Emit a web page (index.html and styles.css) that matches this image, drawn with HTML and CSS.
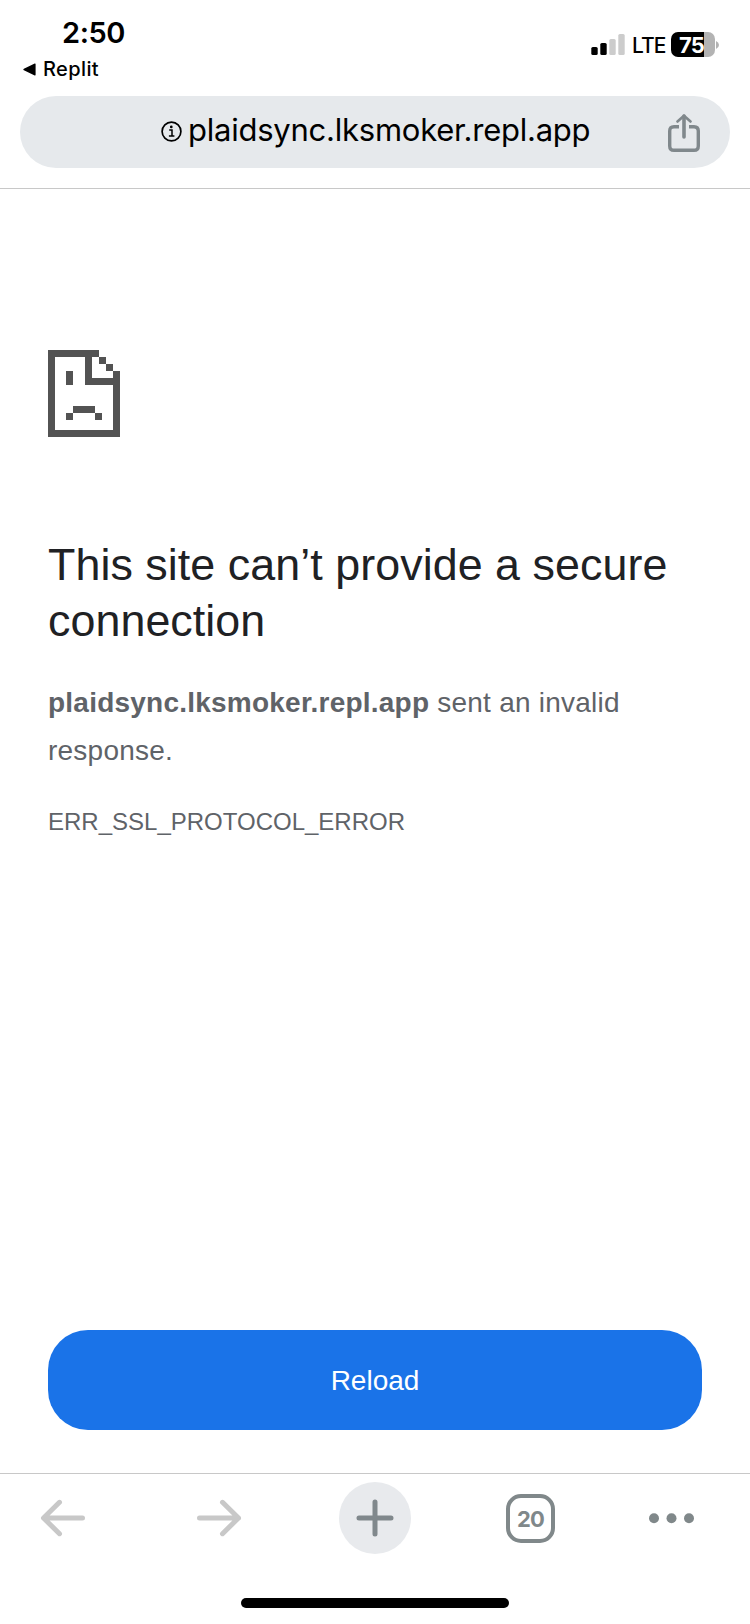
FILE: index.html
```html
<!DOCTYPE html>
<html lang="en">
<head>
<meta charset="utf-8">
<title>plaidsync.lksmoker.repl.app</title>
<link rel="stylesheet" href="styles.css">
</head>
<body>
<div class="screen">
  <header class="status">
    <div class="status-left">
      <span class="time">2:50</span>
      <span class="back-app">
        <svg width="13" height="13" viewBox="0 0 13 13"><path d="M12.600 1.200v10.600q0 .9-.9.6L.9 7.300q-1.200-.8 0-1.600L11.700 .6q.9-.3.9.6z"/></svg>
        <span class="back-label">Replit</span>
      </span>
    </div>
    <div class="status-right">
      <svg class="signal" width="34" height="22" viewBox="0 0 34 22">
        <rect x="0.300" y="13" width="6.400" height="8" rx="1.600"/>
        <rect x="9.300" y="9" width="6.400" height="12" rx="1.600"/>
        <rect x="18.300" y="5" width="6.400" height="16" rx="1.600" fill="#ccc"/>
        <rect x="27.300" y="0" width="6.400" height="21" rx="1.600" fill="#ccc"/>
      </svg>
      <span class="network">LTE</span>
      <span class="battery"><span class="battery-level">75</span></span>
      <svg class="battery-cap" width="3" height="8" viewBox="0 0 3 8"><path d="M0 0q3 1.300 3 4t-3 4z" fill="#b3b3b3"/></svg>
    </div>
  </header>

  <div class="omnibox">
    <svg class="info" width="21" height="21" viewBox="0 0 21 21">
      <circle cx="10.500" cy="10.500" r="9.400" fill="none" stroke="#000" stroke-width="1.700"/>
      <circle cx="10.300" cy="5.900" r="1.350"/>
      <path d="M8.200 9.100h2.800v5.700M7.900 15h5.500" fill="none" stroke="#000" stroke-width="1.500"/>
    </svg>
    <span class="url">plaidsync.lksmoker.repl.app</span>
    <svg class="share" width="32" height="38" viewBox="0 0 32 38" fill="none" stroke="#80888c" stroke-width="3.400" stroke-linecap="round" stroke-linejoin="round">
      <path d="M11 12.700H6q-4.300 0-4.300 4.300v15q0 4.300 4.300 4.300h20q4.300 0 4.300-4.300V17q0-4.300-4.300-4.300h-5" stroke-linecap="butt"/>
      <path d="M16 23V2" stroke-width="3.600"/><path d="M9.500 7.500L16 1.700l6.500 5.800" stroke-width="2.600"/>
    </svg>
  </div>

  <main class="page">
    <svg class="sad" width="72" height="87" viewBox="0 0 72 87" fill="#535353" shape-rendering="crispEdges">
      <path d="M0 0h51v7h-7v21h21v-7h7v66H0zM7 7v73h58V35H37V7z" fill-rule="evenodd"/>
      <path d="M51 7h7v7h-7zM58 14h7v7h-7zM18 21h7v14h-7zM25 56h22v7H25zM18 63h7v7h-7zM47 63h7v7h-7z"/>
    </svg>
    <h1 class="title">This site can’t provide a secure connection</h1>
    <p class="message"><strong class="host">plaidsync.lksmoker.repl.app</strong> <span>sent an invalid</span> <span>response.</span></p>
    <p class="code">ERR_SSL_PROTOCOL_ERROR</p>
    <button class="reload">Reload</button>
  </main>

  <nav class="toolbar">
    <span class="tool"><svg width="46" height="38" viewBox="0 0 46 38" class="arrow"><path d="M42.500 19H4M19.500 3.300L3.500 19l16 15.700"/></svg></span>
    <span class="tool"><svg width="46" height="38" viewBox="0 0 46 38" class="arrow"><path d="M3.500 19h39M26.500 3.300L42.500 19l-16 15.700"/></svg></span>
    <span class="tool"><span class="new-tab"><svg width="38" height="38" viewBox="0 0 38 38"><path d="M3 19h32M19 3v32" stroke="#80888c" stroke-width="5" stroke-linecap="round"/></svg></span></span>
    <span class="tool tool-tabs"><span class="tabs">20</span></span>
    <span class="tool tool-menu"><svg width="46" height="12" viewBox="0 0 46 12" fill="#80888a"><circle cx="5" cy="6.300" r="5"/><circle cx="22.500" cy="6.300" r="5"/><circle cx="40" cy="6.300" r="5"/></svg></span>
  </nav>
  <div class="home-indicator"></div>
</div>
</body>
</html>
```
FILE: styles.css
```css
* { box-sizing: border-box; }
body { margin: 0; background: #fff; }
svg { display: block; flex: none; }
.screen {
  width: 750px;
  height: 1624px;
  display: flex;
  flex-direction: column;
  overflow: hidden;
  background: #fff;
  font-family: Inter, "Liberation Sans", sans-serif;
  color: #000;
}
.status {
  height: 96px;
  display: flex;
  justify-content: space-between;
  flex: none;
}
.status-left { padding: 15px 0 0 23px; }
.time {
  display: block;
  margin-left: 39px;
  font-size: 29px;
  line-height: 35px;
  font-weight: 600;
  letter-spacing: -0.4px;
}
.back-app {
  display: flex;
  align-items: center;
  gap: 7px;
  height: 26px;
  margin-top: 6px;
}
.back-label {
  font-size: 20px;
  line-height: 26px;
  font-weight: 500;
  letter-spacing: 0.4px;
}
.status-right {
  display: flex;
  align-items: center;
  height: 25px;
  margin: 32px 31px 0 0;
}
.signal { margin-top: 1px; }
.network {
  width: 39px;
  margin: 2px 0 0 7px;
  font-size: 21px;
  line-height: 25px;
  font-weight: 500;
  letter-spacing: -0.9px;
}
.battery {
  width: 44px;
  height: 25px;
  border-radius: 7px;
  overflow: hidden;
  background: linear-gradient(to right, #000 33px, #b3b3b3 33px);
}
.battery-level {
  display: block;
  padding-left: 8px;
  font-size: 22px;
  line-height: 26px;
  font-weight: 700;
  letter-spacing: -0.9px;
  color: #fff;
}
.battery-cap { margin-left: 1px; }
.omnibox {
  flex: none;
  height: 72px;
  margin: 0 20px;
  padding: 0 30px 0 141px;
  display: flex;
  align-items: center;
  border-radius: 36px;
  background: #e6e9ec;
}
.share { margin-top: 1px; }
.info { margin-top: -1px; }
.url {
  margin: -5px auto 0 6px;
  font-size: 31px;
  line-height: 38px;
  letter-spacing: -0.24px;
  white-space: nowrap;
}
.page {
  flex: none;
  height: 1286px;
  margin-top: 20px;
  padding: 161px 48px 0;
  display: flex;
  flex-direction: column;
  border-top: 1px solid #c8c8c8;
  border-bottom: 1px solid #c8c8c8;
  font-family: "Liberation Sans", Arial, sans-serif;
}
.title {
  margin: 99px 0 0;
  font-size: 44.8px;
  line-height: 56px;
  font-weight: 400;
  letter-spacing: 0.06px;
  color: #202124;
}
.message {
  margin: 31px 0 0;
  font-size: 28px;
  line-height: 48px;
  letter-spacing: 0.23px;
  color: #5f6368;
}
.host { font-weight: 700; }
.code {
  margin: 29px 0 0;
  font-size: 24px;
  line-height: 36px;
  color: #5f6368;
}
.reload {
  height: 100px;
  margin: auto 0 43px;
  padding: 2px 0 0;
  border: 0;
  border-radius: 40px;
  background: #1a73e8;
  color: #fff;
  font: 28px "Liberation Sans", Arial, sans-serif;
}
.toolbar {
  flex: none;
  height: 88px;
  padding-left: 15px;
  display: flex;
  justify-content: flex-start;
}
.tool {
  width: 96px;
  flex: none;
  display: flex;
  align-items: center;
  justify-content: center;
}
.toolbar .tool:nth-child(2) { width: 216px; }
.toolbar .tool-tabs { width: 215px; }
.toolbar .tool-menu { width: 67px; }
.arrow {
  fill: none;
  stroke: #c8c8c8;
  stroke-width: 5px;
  stroke-linecap: round;
  stroke-linejoin: round;
}
.new-tab {
  width: 72px;
  height: 72px;
  display: flex;
  align-items: center;
  justify-content: center;
  border-radius: 50%;
  background: #e8eaed;
}
.tabs {
  width: 49px;
  height: 49px;
  padding-top: 1px;
  display: flex;
  align-items: center;
  justify-content: center;
  border: 4px solid #80888a;
  border-radius: 15px;
  font-size: 22px;
  line-height: 28px;
  font-weight: 700;
  letter-spacing: -0.8px;
  color: #80888a;
}
.home-indicator {
  flex: none;
  width: 268px;
  height: 10px;
  margin: 36px auto 0;
  border-radius: 5px;
  background: #000;
}
```
